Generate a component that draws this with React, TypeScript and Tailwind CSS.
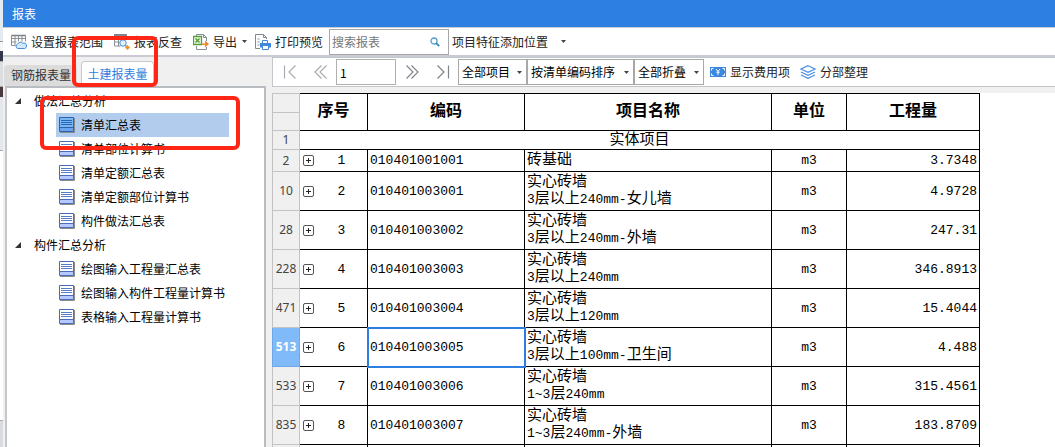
import { ReactNode } from "react";

const rows = [
  { line: 2, no: 1, code: "010401001001", name: ["砖基础"], unit: "m3", qty: "3.7348" },
  { line: 10, no: 2, code: "010401003001", name: ["实心砖墙", "3层以上240mm-女儿墙"], unit: "m3", qty: "4.9728" },
  { line: 28, no: 3, code: "010401003002", name: ["实心砖墙", "3层以上240mm-外墙"], unit: "m3", qty: "247.31" },
  { line: 228, no: 4, code: "010401003003", name: ["实心砖墙", "3层以上240mm"], unit: "m3", qty: "346.8913" },
  { line: 471, no: 5, code: "010401003004", name: ["实心砖墙", "3层以上120mm"], unit: "m3", qty: "15.4044" },
  { line: 513, no: 6, code: "010401003005", name: ["实心砖墙", "3层以上100mm-卫生间"], unit: "m3", qty: "4.488", selected: true },
  { line: 533, no: 7, code: "010401003006", name: ["实心砖墙", "1~3层240mm"], unit: "m3", qty: "315.4561" },
  { line: 835, no: 8, code: "010401003007", name: ["实心砖墙", "1~3层240mm-外墙"], unit: "m3", qty: "183.8709" },
];

const tree = [
  {
    title: "做法汇总分析",
    items: ["清单汇总表", "清单部位计算书", "清单定额汇总表", "清单定额部位计算书", "构件做法汇总表"],
  },
  {
    title: "构件汇总分析",
    items: ["绘图输入工程量汇总表", "绘图输入构件工程量计算书", "表格输入工程量计算书"],
  },
];

/** Chinese runs are set at 15px, Latin runs in a half-width mono face. */
function Mixed({ text }: { text: string }) {
  return (
    <>
      {text.split(/([\x20-\x7e]+)/).filter(Boolean).map((part, i) =>
        /^[\x20-\x7e]/.test(part) ? (
          <span key={i} className="font-['Liberation_Mono',monospace] text-[13px]">{part}</span>
        ) : (
          <span key={i}>{part}</span>
        ),
      )}
    </>
  );
}

function Caret() {
  return (
    <svg viewBox="0 0 5 3" className="h-[3px] w-[5px] shrink-0" aria-hidden="true">
      <path d="M0 0h5L2.5 3z" fill="#444" />
    </svg>
  );
}

function RangeIcon() {
  return (
    <svg viewBox="0 0 16 16" className="size-4 shrink-0" fill="none" aria-hidden="true">
      <path d="M.5 1.500h14v6M.5 1.500v10h4M.5 4.500h14M.5 8h5M4 1.500v10M7.500 1.500v6M11 1.500v6" stroke="#8a9196" />
      <path d="M.5 1.500h14" stroke="#7b8287" strokeWidth="1.500" />
      <path d="M7 14.500a2.300 2.300 0 0 1-.2-4.500 3 3 0 0 1 5-.8 2.800 2.800 0 0 1 2 5.300z" fill="#d4e8fb" stroke="#4a8fd8" />
    </svg>
  );
}

function CheckBackIcon() {
  return (
    <svg viewBox="0 0 16 16" className="size-4 shrink-0" fill="none" aria-hidden="true">
      <path d="M0 0h13v4H0z" fill="#7f868c" />
      <path d="M.5 4v8h6M.5 8h5M4.500 4v8M12.500 4v2" stroke="#8a9196" />
      <circle cx="9" cy="9" r="3.200" fill="#e4f0fc" stroke="#4a8fd8" />
      <path d="m11.500 11.500 2 2" stroke="#4a8fd8" strokeWidth="1.500" />
      <path d="m13.500 11 2.500 2.500-2.500 2.500-2.500-2.500z" fill="#f59120" />
    </svg>
  );
}

function ExportIcon() {
  return (
    <svg viewBox="0 0 16 16" className="size-4 shrink-0" fill="none" aria-hidden="true">
      <path d="M3.500 2V.5h7l3 3V7M3.500 12v3.500h10V13M10.500.5v3h3" stroke="#8a9196" />
      <path d="M.5 2.500h8v8h-8z" fill="#eff8ea" stroke="#56a036" strokeWidth="1.300" />
      <path d="m2.500 4.500 4 4m0-4-4 4" stroke="#56a036" strokeWidth="1.500" />
      <path d="M8.500 9.500h3.500V6.500l4 3.500-4 3.500v-2.500H8.500z" fill="#f0862d" />
    </svg>
  );
}

function PreviewIcon() {
  return (
    <svg viewBox="0 0 16 16" className="size-4 shrink-0" fill="none" aria-hidden="true">
      <path d="M5 14.500H.5V.5h8l3 3V5M8.500.5v3h3" stroke="#7f8a94" />
      <path d="M2.500 5h2M2.500 8h2M2.500 11h2" stroke="#7f8a94" />
      <path d="M7.500 9V6.500h5V9" stroke="#3f86dc" />
      <path d="M5 9h11v4.500H5z" fill="#3f86dc" />
      <path d="M7.500 11.500h6v4h-6z" fill="#fff" stroke="#3f86dc" />
    </svg>
  );
}

function SearchIcon() {
  return (
    <svg viewBox="0 0 10 10" className="size-[10px]" fill="none" aria-hidden="true">
      <circle cx="4" cy="4" r="3" stroke="#4f9fd0" strokeWidth="1.300" />
      <path d="m6.200 6.200 3 3" stroke="#2f86bd" strokeWidth="1.800" />
    </svg>
  );
}

function NavIcon({ d, color }: { d: string; color: string }) {
  return (
    <svg viewBox="0 0 14 14" className="size-[14px]" fill="none" aria-hidden="true">
      <path d={d} stroke={color} strokeWidth="1.200" />
    </svg>
  );
}

function FeeIcon() {
  return (
    <svg viewBox="0 0 16 10" className="h-[10px] w-4" fill="none" aria-hidden="true">
      <path d="M0 0h16v10H0z" fill="#3c87df" />
      <path d="M1.500 3.500v-2h2M12.500 1.500h2v2M1.500 6.500v2h2M12.500 8.500h2v-2" stroke="#fff" />
      <path d="m6 2 2 2.500L10 2M8 4.500V8M6.300 5.200h3.400" stroke="#fff" />
    </svg>
  );
}

function LayersIcon() {
  return (
    <svg viewBox="0 0 16 14" className="h-[14px] w-4" fill="none" stroke="#4a8fe0" strokeWidth="1.100" aria-hidden="true">
      <path d="M8 .7 15 4 8 7.300 1 4z" />
      <path d="m1 7 7 3.300L15 7M1 10l7 3.300L15 10" />
    </svg>
  );
}

function ReportIcon({ active }: { active: boolean }) {
  return (
    <svg viewBox="0 0 16 16" className="size-4 shrink-0" fill="none" aria-hidden="true">
      <path d="M15.500 1v14.500H1" stroke="#8c8c8c" />
      <path d="M.5.5h14v14H.5z" fill={active ? "#7ab6f2" : "#fff"} stroke={active ? "#2c62ae" : "#4a6bb8"} />
      <path d="M1 11h13v3H1z" fill={active ? "#6aa5ee" : "#b5c9ff"} />
      <path d="M1 10.500h13" stroke={active ? "#2c62ae" : "#4a6bb8"} />
      <path d="M2 3.500h11M2 5.500h11M2 7.500h11" stroke={active ? "#2466b8" : "#5a7cc8"} />
    </svg>
  );
}

function ToolButton({ icon, children, caret }: { icon?: ReactNode; children: ReactNode; caret?: boolean }) {
  return (
    <button type="button" className="flex h-6 shrink-0 items-center gap-1 whitespace-nowrap text-[#222]">
      {icon}
      {children}
      {caret && <span className="ml-px"><Caret /></span>}
    </button>
  );
}

function NavButton({ label, d, color }: { label: string; d: string; color: string }) {
  return (
    <button type="button" aria-label={label} className="flex h-6 w-[31px] shrink-0 items-center justify-center">
      <NavIcon d={d} color={color} />
    </button>
  );
}

function Picker({ label, value, width }: { label: string; value: string; width: string }) {
  return (
    <div className={`relative flex shrink-0 items-center ${width}`}>
      <select aria-label={label} className="h-[26px] w-full appearance-none border border-[#a8a8a8] bg-white pl-[3px] text-black">
        <option>{value}</option>
      </select>
      <span className="pointer-events-none absolute right-[5px]"><Caret /></span>
    </div>
  );
}

function Gutter({ children, active }: { children?: ReactNode; active?: boolean }) {
  return (
    <th
      scope="row"
      className={
        active
          ? "border-r border-b border-l border-[#6fa8ea] bg-[#80baf9] p-0 text-center font-['Noto_Sans',sans-serif] text-xs font-bold text-white"
          : "border-r border-b border-l border-[#c3c3c3] bg-[#f0f0f0] p-0 text-center font-['Noto_Sans',sans-serif] text-xs font-normal text-[#444]"
      }
    >
      {children}
    </th>
  );
}

function Sidebar() {
  return (
    <aside className="relative flex w-[263px] shrink-0 flex-col pt-1">
      <div className="flex h-[25px] items-end pl-px" role="tablist">
        <button type="button" role="tab" aria-selected="false" className="h-[21px] w-[73px] rounded-t-sm bg-[#dcdcdc] pb-px pl-[7px] text-left whitespace-nowrap text-[#333]">
          钢筋报表量
        </button>
        <button type="button" role="tab" aria-selected="true" className="ml-1 h-[25px] w-[73px] rounded-t-sm border border-b-0 border-[#c8c8c8] bg-white text-center whitespace-nowrap text-[#2e80e0]">
          土建报表量
        </button>
      </div>
      <nav className="ml-0.5 flex-1 border-2 border-b-0 border-[#b9bcc0] border-l-[#c3c7cc] bg-white pt-px">
        {tree.map((group) => (
          <section key={group.title}>
            <button type="button" className="flex h-6 items-center gap-[13px] pl-2">
              <svg viewBox="0 0 6 6" className="size-[6px]" aria-hidden="true">
                <path d="M6 0v6H0z" fill="#333" />
              </svg>
              {group.title}
            </button>
            <ul>
              {group.items.map((item) => {
                const active = item === "清单汇总表";
                return (
                  <li key={item} className={active ? "mr-[35px] ml-[49px] bg-[#b2ccee]" : "ml-[49px]"}>
                    <a href="#report" className="flex h-6 items-center gap-[6px] pl-[3px] whitespace-nowrap">
                      <ReportIcon active={active} />
                      {item}
                    </a>
                  </li>
                );
              })}
            </ul>
          </section>
        ))}
      </nav>
      <div className="pointer-events-none absolute top-[-21px] left-[69px] h-[51px] w-[86px] rounded-md border-4 border-[#ff2616]" />
      <div className="pointer-events-none absolute top-[39px] left-[37px] h-[54px] w-[200px] rounded-md border-4 border-[#ff2616]" />
    </aside>
  );
}

function ReportTable() {
  const head = "border-t border-r border-b border-black p-0 text-center text-base leading-5 font-bold";
  const cell = "border-r border-b border-black p-0";
  return (
    <table className="w-[708px] table-fixed border-separate border-spacing-0 font-['Liberation_Mono','Noto_Sans_CJK_SC',monospace] text-[15px] leading-[17px] text-black">
      <colgroup>
        <col className="w-[28px]" />
        <col className="w-[68px]" />
        <col className="w-[157px]" />
        <col className="w-[247px]" />
        <col className="w-[75px]" />
        <col className="w-[133px]" />
      </colgroup>
      <thead>
        <tr className="h-[38px]">
          <td className="border border-[#c3c3c3] bg-[#f0f0f0] p-0">
            <div className="h-px bg-[#c3c3c3]" />
          </td>
          <th scope="col" className={head}>序号</th>
          <th scope="col" className={head}>编码</th>
          <th scope="col" className={head}>项目名称</th>
          <th scope="col" className={head}>单位</th>
          <th scope="col" className={head}>工程量</th>
        </tr>
      </thead>
      <tbody>
        <tr className="h-[19px]">
          <Gutter>1</Gutter>
          <td colSpan={5} className={`${cell} text-center`}>实体项目</td>
        </tr>
        {rows.map((row) => (
          <tr key={row.no} className={row.name.length > 1 ? "h-[39px]" : "h-[22px]"}>
            <Gutter active={row.selected}>{row.line}</Gutter>
            <td className={cell}>
              <div className="flex items-center pl-[3px]">
                <button type="button" aria-label="展开" className="flex size-[11px] items-center justify-center rounded-xs border border-[#555]">
                  <svg viewBox="0 0 5 5" className="size-[5px]" aria-hidden="true">
                    <path d="M2 0h1v2h2v1H3v2H2V3H0V2h2z" fill="#222" />
                  </svg>
                </button>
                <span className="flex-1 pl-[2px] text-center text-[13px]">{row.no}</span>
              </div>
            </td>
            <td className={row.selected ? `${cell} pl-[2px] text-[13px] outline-2 -outline-offset-1 outline-[#2c7fe0]` : `${cell} pl-[2px] text-[13px]`}>
              {row.code}
            </td>
            <td className={`${cell} pl-[2px]`}>
              {row.name.map((text) => (
                <div key={text} className="h-[17px] whitespace-nowrap"><Mixed text={text} /></div>
              ))}
            </td>
            <td className={`${cell} text-center text-[13px]`}>{row.unit}</td>
            <td className={`${cell} pr-[2px] text-right text-[13px]`}>{row.qty}</td>
          </tr>
        ))}
        <tr className="h-[39px]">
          <Gutter />
          <td className={cell} />
          <td className={cell} />
          <td className={cell} />
          <td className={cell} />
          <td className={cell} />
        </tr>
      </tbody>
    </table>
  );
}

export default function App() {
  return (
    <div className="flex h-screen overflow-hidden bg-[#f0f0f0] font-['Noto_Sans_CJK_SC',sans-serif] text-xs text-black">
      <div className="flex w-[3px] shrink-0 flex-col bg-[#f4f5f7]" aria-hidden="true">
        <div className="h-[41px] bg-[#e3eaf0]" />
        <div className="h-[10px] border-t border-[#999]" />
        <div className="h-[10px] bg-[#33384e]" />
        <div className="h-[26px] border-y border-[#aaa] bg-[#dcdee2]" />
        <div className="h-[10px] bg-[#4a3a40]" />
        <div className="h-[54px] border-b border-[#aaa] bg-[#e4e8ec]" />
        <div className="flex-1 bg-white" />
        <div className="h-[27px] border-t border-[#aaa] bg-[#d9dbe0]" />
      </div>
      <div className="flex min-w-0 flex-1 flex-col">
        <header className="flex h-[27px] shrink-0 items-center bg-[#2d7fe1] pl-[9px] text-white">
          <h1>报表</h1>
        </header>
        <div className="flex h-[30px] shrink-0 items-center border-t border-b-2 border-[#c8cbd1] bg-white pl-2">
          <ToolButton icon={<RangeIcon />}>设置报表范围</ToolButton>
          <div className="ml-[11px]"><ToolButton icon={<CheckBackIcon />}>报表反查</ToolButton></div>
          <div className="ml-[11px]"><ToolButton icon={<ExportIcon />} caret>导出</ToolButton></div>
          <div className="ml-2"><ToolButton icon={<PreviewIcon />}>打印预览</ToolButton></div>
          <label className="ml-[6px] flex h-[26px] w-[120px] shrink-0 items-center border border-[#a8a8a8] bg-white pr-2 pl-[2px]">
            <input type="text" aria-label="搜索报表" placeholder="搜索报表" className="min-w-0 flex-1 outline-none placeholder:text-[#777]" />
            <SearchIcon />
          </label>
          <div className="ml-[3px] flex items-center"><ToolButton caret><span className="mr-2">项目特征添加位置</span></ToolButton></div>
        </div>
        <div className="flex min-h-0 flex-1">
          <Sidebar />
          <main className="ml-[6px] flex min-w-0 flex-1 flex-col">
            <div className="flex h-[30px] shrink-0 items-center border border-r-0 border-[#c3c7cc] bg-white pl-px">
              <NavButton label="首页" d="M1.500.5v13M12.500.5 6 7l6.500 6.500" color="#a9adb2" />
              <NavButton label="上一页" d="M7.500.5 1 7l6.500 6.500M12.500.5 6 7l6.500 6.500" color="#a9adb2" />
              <input type="text" aria-label="页码" defaultValue="1" className="h-[26px] w-[60px] shrink-0 border border-[#b0b0b0] bg-white pl-[3px] outline-none" />
              <NavButton label="下一页" d="M1.500.5 8 7l-6.500 6.500M6.500.5 13 7l-6.500 6.500" color="#7f858b" />
              <NavButton label="末页" d="M1.500.5 8 7l-6.500 6.500M12.500.5v13" color="#7f858b" />
              <Picker label="项目" value="全部项目" width="w-[69px]" />
              <Picker label="排序" value="按清单编码排序" width="w-[107px]" />
              <Picker label="折叠" value="全部折叠" width="w-[70px]" />
              <div className="ml-[6px]"><ToolButton icon={<FeeIcon />}>显示费用项</ToolButton></div>
              <div className="ml-[10px]"><ToolButton icon={<LayersIcon />}>分部整理</ToolButton></div>
            </div>
            <div className="mt-[6px] min-h-0 flex-1 overflow-hidden bg-white">
              <ReportTable />
            </div>
          </main>
        </div>
      </div>
    </div>
  );
}
